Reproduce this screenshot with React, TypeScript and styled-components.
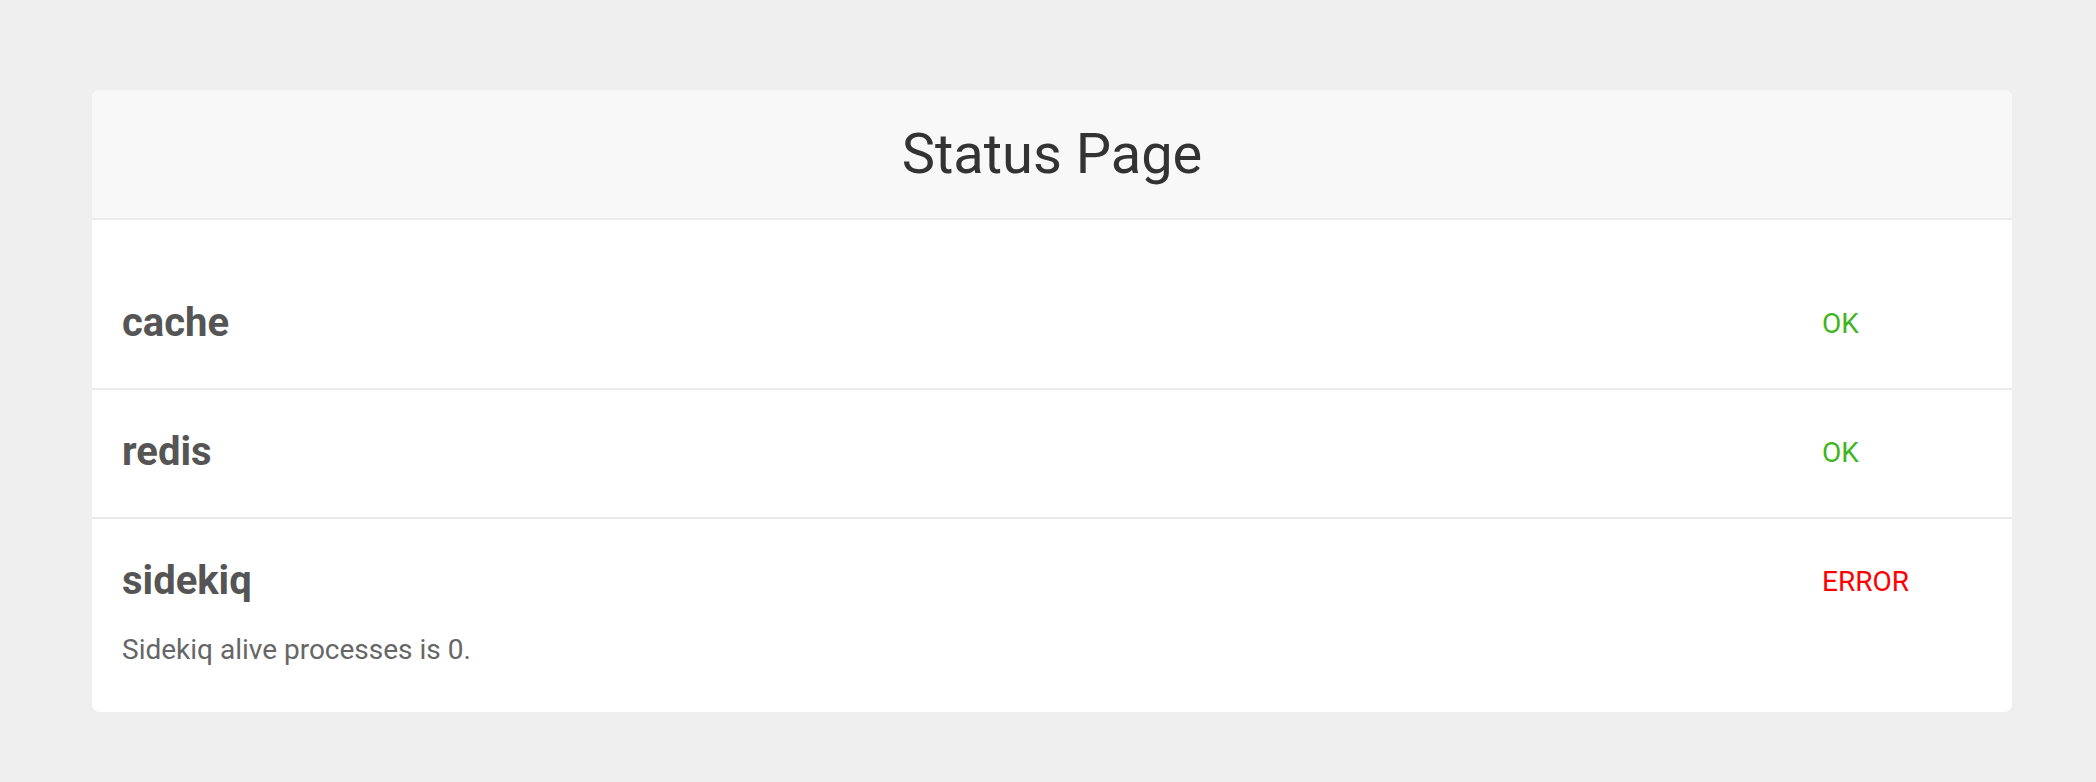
import React from "react";
import styled, { createGlobalStyle } from "styled-components";

const GlobalStyle = createGlobalStyle`
  html, body {
    margin: 0;
    padding: 0;
    background: #efefef;
    font-family: Roboto, "Liberation Sans", sans-serif;
  }
`;

const Page = styled.div`
  padding: 90px 84px 70px 92px;
`;

const Card = styled.section`
  background: #fff;
  border-radius: 8px;
  overflow: hidden;
`;

const Header = styled.header`
  background: #f8f8f8;
  border-bottom: 2px solid #ebebeb;
  padding: 31px 0;
  text-align: center;
`;

const Title = styled.h1`
  margin: 0;
  font-size: 56px;
  line-height: 66px;
  font-weight: 400;
  color: #333;
`;

const List = styled.div`
  padding-top: 41px;
`;

const Row = styled.div`
  display: grid;
  grid-template-columns: 1fr 160px;
  padding: 37px 30px 41px 30px;
  border-bottom: 2px solid #ebebeb;

  &:last-child {
    border-bottom: none;
  }
`;

const Check = styled.div``;

const Name = styled.h2`
  margin: 0;
  font-size: 40px;
  line-height: 49px;
  font-weight: 700;
  color: #555;
`;

const Message = styled.p`
  margin: 28px 0 5px;
  font-size: 28px;
  line-height: 33px;
  color: #666;
`;

const Status = styled.div<{ $ok: boolean }>`
  margin-top: 9px;
  font-size: 28px;
  line-height: 33px;
  color: ${(p) => (p.$ok ? "#3fb61c" : "#ff0000")};
`;

const checks = [
  { name: "cache", ok: true },
  { name: "redis", ok: true },
  { name: "sidekiq", ok: false, message: "Sidekiq alive processes is 0." },
];

const App: React.FC = () => {
  return (
    <Page>
      <GlobalStyle />
      <Card>
        <Header>
          <Title>Status Page</Title>
        </Header>
        <List>
          {checks.map((c) => (
            <Row key={c.name}>
              <Check>
                <Name>{c.name}</Name>
                {c.message && <Message>{c.message}</Message>}
              </Check>
              <Status $ok={c.ok}>{c.ok ? "OK" : "ERROR"}</Status>
            </Row>
          ))}
        </List>
      </Card>
    </Page>
  );
};

export default App;
